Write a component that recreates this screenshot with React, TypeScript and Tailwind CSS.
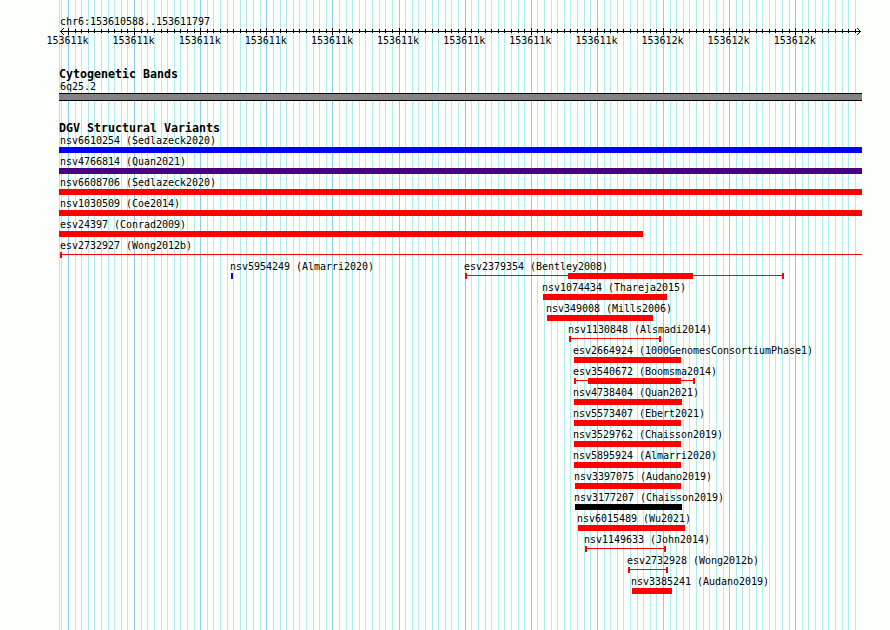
type Segment = { start: number; end: number; color: string };
type Variant = {
  label: string;
  start: number;
  end: number;
  color?: string;
  // thin connector with end caps instead of a solid bar
  range?: boolean;
  core?: [number, number];
  openEnd?: boolean;
};

const LEFT = 59;
const RED = "#ff0000";

const ticks = Array.from({ length: 121 }, (_, i) => ({
  x: Math.round(67.95 + (i - 1) * 6.612),
  major: (i - 1) % 10 === 0,
}));

const scaleLabels = ["153611k", "153611k", "153611k", "153611k", "153611k", "153611k", "153611k", "153611k", "153611k", "153612k", "153612k", "153612k"];

const rows: Variant[][] = [
  [{ label: "nsv6610254 (Sedlazeck2020)", start: 59, end: 862, color: "#0000ff" }],
  [{ label: "nsv4766814 (Quan2021)", start: 59, end: 862, color: "#4b0082" }],
  [{ label: "nsv6608706 (Sedlazeck2020)", start: 59, end: 862 }],
  [{ label: "nsv1030509 (Coe2014)", start: 59, end: 862 }],
  [{ label: "esv24397 (Conrad2009)", start: 59, end: 643 }],
  [{ label: "esv2732927 (Wong2012b)", start: 60, end: 862, range: true, openEnd: true }],
  [
    { label: "nsv5954249 (Almarri2020)", start: 231, end: 233, color: "#0000ff" },
    { label: "esv2379354 (Bentley2008)", start: 465, end: 784, range: true, core: [568, 693] },
  ],
  [{ label: "nsv1074434 (Thareja2015)", start: 543, end: 667 }],
  [{ label: "nsv349008 (Mills2006)", start: 547, end: 653 }],
  [{ label: "nsv1130848 (Alsmadi2014)", start: 569, end: 661, range: true }],
  [{ label: "esv2664924 (1000GenomesConsortiumPhase1)", start: 574, end: 681 }],
  [{ label: "esv3540672 (Boomsma2014)", start: 574, end: 695, range: true, core: [588, 681] }],
  [{ label: "nsv4738404 (Quan2021)", start: 574, end: 682 }],
  [{ label: "nsv5573407 (Ebert2021)", start: 574, end: 681 }],
  [{ label: "nsv3529762 (Chaisson2019)", start: 574, end: 681 }],
  [{ label: "nsv5895924 (Almarri2020)", start: 574, end: 681 }],
  [{ label: "nsv3397075 (Audano2019)", start: 575, end: 681 }],
  [{ label: "nsv3177207 (Chaisson2019)", start: 575, end: 682, color: "#000000" }],
  [{ label: "nsv6015489 (Wu2021)", start: 578, end: 685 }],
  [{ label: "nsv1149633 (John2014)", start: 585, end: 666, range: true }],
  [{ label: "esv2732928 (Wong2012b)", start: 628, end: 668, range: true }],
  [{ label: "nsv3385241 (Audano2019)", start: 632, end: 672 }],
];

function GridLines() {
  return (
    <svg className="absolute inset-0" width="890" height="630" shapeRendering="crispEdges">
      <rect x={59} y={0} width={1} height={630} fill="#afeeee" />
      {ticks.map((t) => (
        t.x < 860 && <rect key={t.x} x={t.x} y={0} width={1} height={630} fill={t.major ? "#87ceeb" : "#afeeee"} />
      ))}
    </svg>
  );
}

function Ruler() {
  return (
    <svg className="block h-[9px] w-[890px]" viewBox="0 0 890 9" shapeRendering="crispEdges">
      <rect x={60} y={4} width={801} height={1} />
      {ticks.map((t) => (
        t.x > 64 && t.x < 860 && <rect key={t.x} x={t.x} y={t.major ? 1 : 2} width={1} height={t.major ? 7 : 4} />
      ))}
      {[1, 2, 3].map((d) => (
        <g key={d}>
          <rect x={60 + d} y={4 - d} width={1} height={1} />
          <rect x={60 + d} y={4 + d} width={1} height={1} />
          <rect x={860 - d} y={4 - d} width={1} height={1} />
          <rect x={860 - d} y={4 + d} width={1} height={1} />
        </g>
      ))}
    </svg>
  );
}

function Glyph({ v }: { v: Variant }) {
  const color = v.color ?? RED;
  if (!v.range) {
    return <div className="h-1.5" style={{ backgroundColor: color }} />;
  }
  const segments: Segment[] = v.core ? [{ start: v.core[0], end: v.core[1], color }] : [];
  return (
    <svg className="block h-1.5 w-full" shapeRendering="crispEdges" fill={color}>
      <rect y={2} width={v.end - v.start} height={1} />
      <rect width={2} height={6} />
      {!v.openEnd && <rect x={v.end - v.start - 2} width={2} height={6} />}
      {segments.map((s) => (
        <rect key={s.start} x={s.start - v.start} width={s.end - s.start} height={6} />
      ))}
    </svg>
  );
}

function VariantRow({ items }: { items: Variant[] }) {
  return (
    <div className="flex h-[21px]">
      {items.map((v, i) => (
        <div
          key={v.label}
          className="shrink-0"
          style={{ marginLeft: v.start - (i ? items[i - 1].end : 0), width: v.end - v.start }}
        >
          <div
            className="h-3 whitespace-nowrap leading-3"
            style={{ marginLeft: v.start === LEFT ? 1 : v.start > 100 ? -1 : 0 }}
          >
            {v.label}
          </div>
          <Glyph v={v} />
        </div>
      ))}
    </div>
  );
}

export default function App() {
  return (
    <div className="relative h-[630px] w-[890px] overflow-hidden bg-[#fdfffc] font-['DejaVu_Sans_Mono',monospace] text-[10px] tracking-[-0.02px] text-black">
      <GridLines />
      <main className="relative pt-4">
        <div className="h-[11px] pl-[60px] leading-3">chr6:153610588..153611797</div>
        <Ruler />
        <div className="flex h-3 pl-[46.5px] leading-[10px]">
          {scaleLabels.map((label, i) => (
            <span key={i} className="w-[66.12px] shrink-0">{label}</span>
          ))}
        </div>

        <section className="pt-5">
          <h2 className="h-[13px] pl-[59px] text-[11.63px] font-bold leading-3 tracking-normal">Cytogenetic Bands</h2>
          <div className="h-3 pl-[60px] leading-3">6q25.2</div>
          <div className="ml-[59px] h-2 w-[803px] border-y border-black bg-[#848284]" />
        </section>

        <section className="pt-[21px]">
          <h2 className="h-[13px] pl-[59px] text-[11.63px] font-bold leading-3 tracking-normal">DGV Structural Variants</h2>
          {rows.map((items) => (
            <VariantRow key={items[0].label} items={items} />
          ))}
        </section>
      </main>
    </div>
  );
}
